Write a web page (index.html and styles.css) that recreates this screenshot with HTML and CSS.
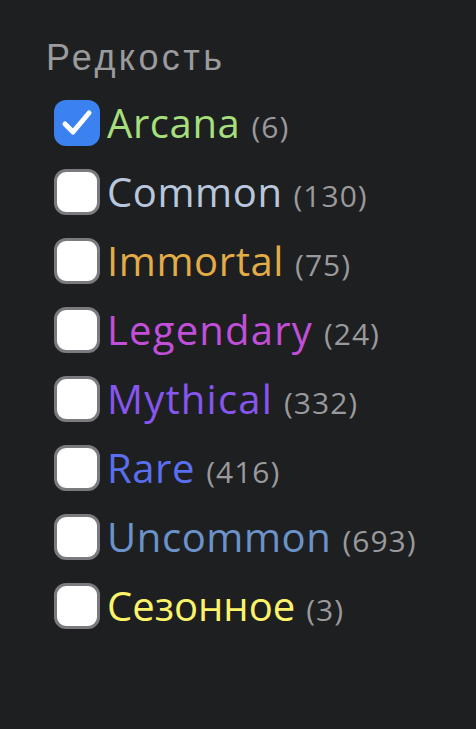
FILE: index.html
```html
<!DOCTYPE html>
<html lang="ru">
<head>
<meta charset="utf-8">
<link rel="stylesheet" href="styles.css">
</head>
<body>
<div class="panel">
  <div class="title">Редкость</div>
  <ul class="list">
    <li class="row"><span class="box checked"><svg viewBox="0 0 46 46" width="46" height="46"><path d="M11 24 L19 32 L35 13" fill="none" stroke="#fff" stroke-width="5" stroke-linecap="round" stroke-linejoin="round"/></svg></span><span class="name arcana">Arcana</span><span class="count">(6)</span></li>
    <li class="row"><span class="box"></span><span class="name common">Common</span><span class="count">(130)</span></li>
    <li class="row"><span class="box"></span><span class="name immortal">Immortal</span><span class="count">(75)</span></li>
    <li class="row"><span class="box"></span><span class="name legendary">Legendary</span><span class="count">(24)</span></li>
    <li class="row"><span class="box"></span><span class="name mythical">Mythical</span><span class="count">(332)</span></li>
    <li class="row"><span class="box"></span><span class="name rare">Rare</span><span class="count">(416)</span></li>
    <li class="row"><span class="box"></span><span class="name uncommon">Uncommon</span><span class="count">(693)</span></li>
    <li class="row"><span class="box"></span><span class="name seasonal">Сезонное</span><span class="count">(3)</span></li>
  </ul>
</div>
</body>
</html>
```
FILE: styles.css
```css
html, body {
  margin: 0;
  padding: 0;
  background: #1e1f21;
}
.panel {
  padding: 37px 0 0 46px;
  width: 476px;
  height: 729px;
  box-sizing: border-box;
}
.title {
  font-family: "Liberation Sans", Arial, sans-serif;
  font-size: 36px;
  line-height: 42px;
  letter-spacing: 3.4px;
  color: #9b9b9d;
}
.list {
  list-style: none;
  margin: 21px 0 0 0;
  padding: 0;
  display: flex;
  flex-direction: column;
  gap: 23px;
}
.row {
  display: flex;
  align-items: center;
  height: 46px;
  font-family: "Open Sans", sans-serif;
}
.box {
  width: 46px;
  height: 46px;
  box-sizing: border-box;
  border-radius: 12px;
  background: #ffffff;
  border: 3px solid #7b7b7f;
  margin-left: 8px;
  margin-right: 7px;
  flex: none;
  display: flex;
  align-items: center;
  justify-content: center;
}
.box.checked {
  background: #3b82f0;
  border: none;
}
.name {
  font-size: 40px;
  line-height: 46px;
  letter-spacing: 0.6px;
}
.count {
  font-size: 30px;
  letter-spacing: 1px;
  color: #9a9a9c;
  margin-left: 11px;
  margin-top: 6px;
}
.arcana { color: #a6df7b; }
.common { color: #b9c7dd; }
.immortal { color: #e2ac47; }
.legendary { color: #c24fd9; letter-spacing: 1.2px; }
.mythical { color: #8756ef; letter-spacing: 1.2px; }
.rare { color: #5a6ef0; }
.uncommon { color: #6b93c9; }
.seasonal { color: #fcf36b; letter-spacing: 0; }
```
